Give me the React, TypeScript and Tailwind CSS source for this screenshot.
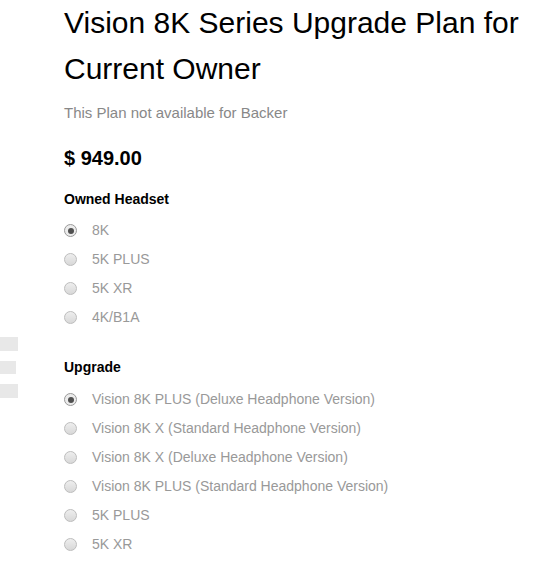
import React from "react";

const owned = ["8K", "5K PLUS", "5K XR", "4K/B1A"];
const upgrades = [
  "Vision 8K PLUS (Deluxe Headphone Version)",
  "Vision 8K X (Standard Headphone Version)",
  "Vision 8K X (Deluxe Headphone Version)",
  "Vision 8K PLUS (Standard Headphone Version)",
  "5K PLUS",
  "5K XR",
];

const Radio = ({ checked }: { checked: boolean }) =>
  checked ? (
    <span className="w-[13px] h-[13px] rounded-full border border-[#9a9a9a] bg-[#ececec] flex items-center justify-center shrink-0">
      <span className="w-[6px] h-[6px] rounded-full bg-[#505050]" />
    </span>
  ) : (
    <span className="w-[13px] h-[13px] rounded-full border border-[#bdbdbd] bg-gradient-to-b from-[#eeeeee] to-[#d8d8d8] shrink-0" />
  );

const Options = ({ items }: { items: string[] }) => (
  <div className="flex flex-col">
    {items.map((label, i) => (
      <label key={label} className="flex items-center h-[29px] leading-[29px]">
        <Radio checked={i === 0} />
        <span className="ml-[15px] text-[14px] text-[#999999]">{label}</span>
      </label>
    ))}
  </div>
);

export default function App() {
  return (
    <div className="flex bg-white min-h-[573px] font-['Liberation_Sans',Arial,sans-serif]">
      {/* left edge fragments */}
      <div className="w-[64px] shrink-0 pt-[337px] flex flex-col gap-[10px]">
        <div className="w-[18px] h-[14px] bg-[#e8e8e8]" />
        <div className="w-[16px] h-[13px] bg-[#e8e8e8]" />
        <div className="w-[18px] h-[14px] bg-[#e8e8e8]" />
      </div>

      <div className="flex flex-col">
        <h1 className="text-[30px] leading-[46px] text-black font-normal">
          Vision 8K Series Upgrade Plan for
          <br />
          Current Owner
        </h1>
        <p className="mt-[11px] text-[15px] leading-[20px] text-[#888888]">
          This Plan not available for Backer
        </p>
        <div className="mt-[23px] text-[20px] leading-[24px] font-bold text-black">$ 949.00</div>

        <div className="mt-[19px] text-[14px] leading-[20px] font-bold text-black">Owned Headset</div>
        <div className="mt-[7px]">
          <Options items={owned} />
        </div>

        <div className="mt-[25px] text-[14px] leading-[20px] font-bold text-black">Upgrade</div>
        <div className="mt-[8px]">
          <Options items={upgrades} />
        </div>
      </div>
    </div>
  );
}
